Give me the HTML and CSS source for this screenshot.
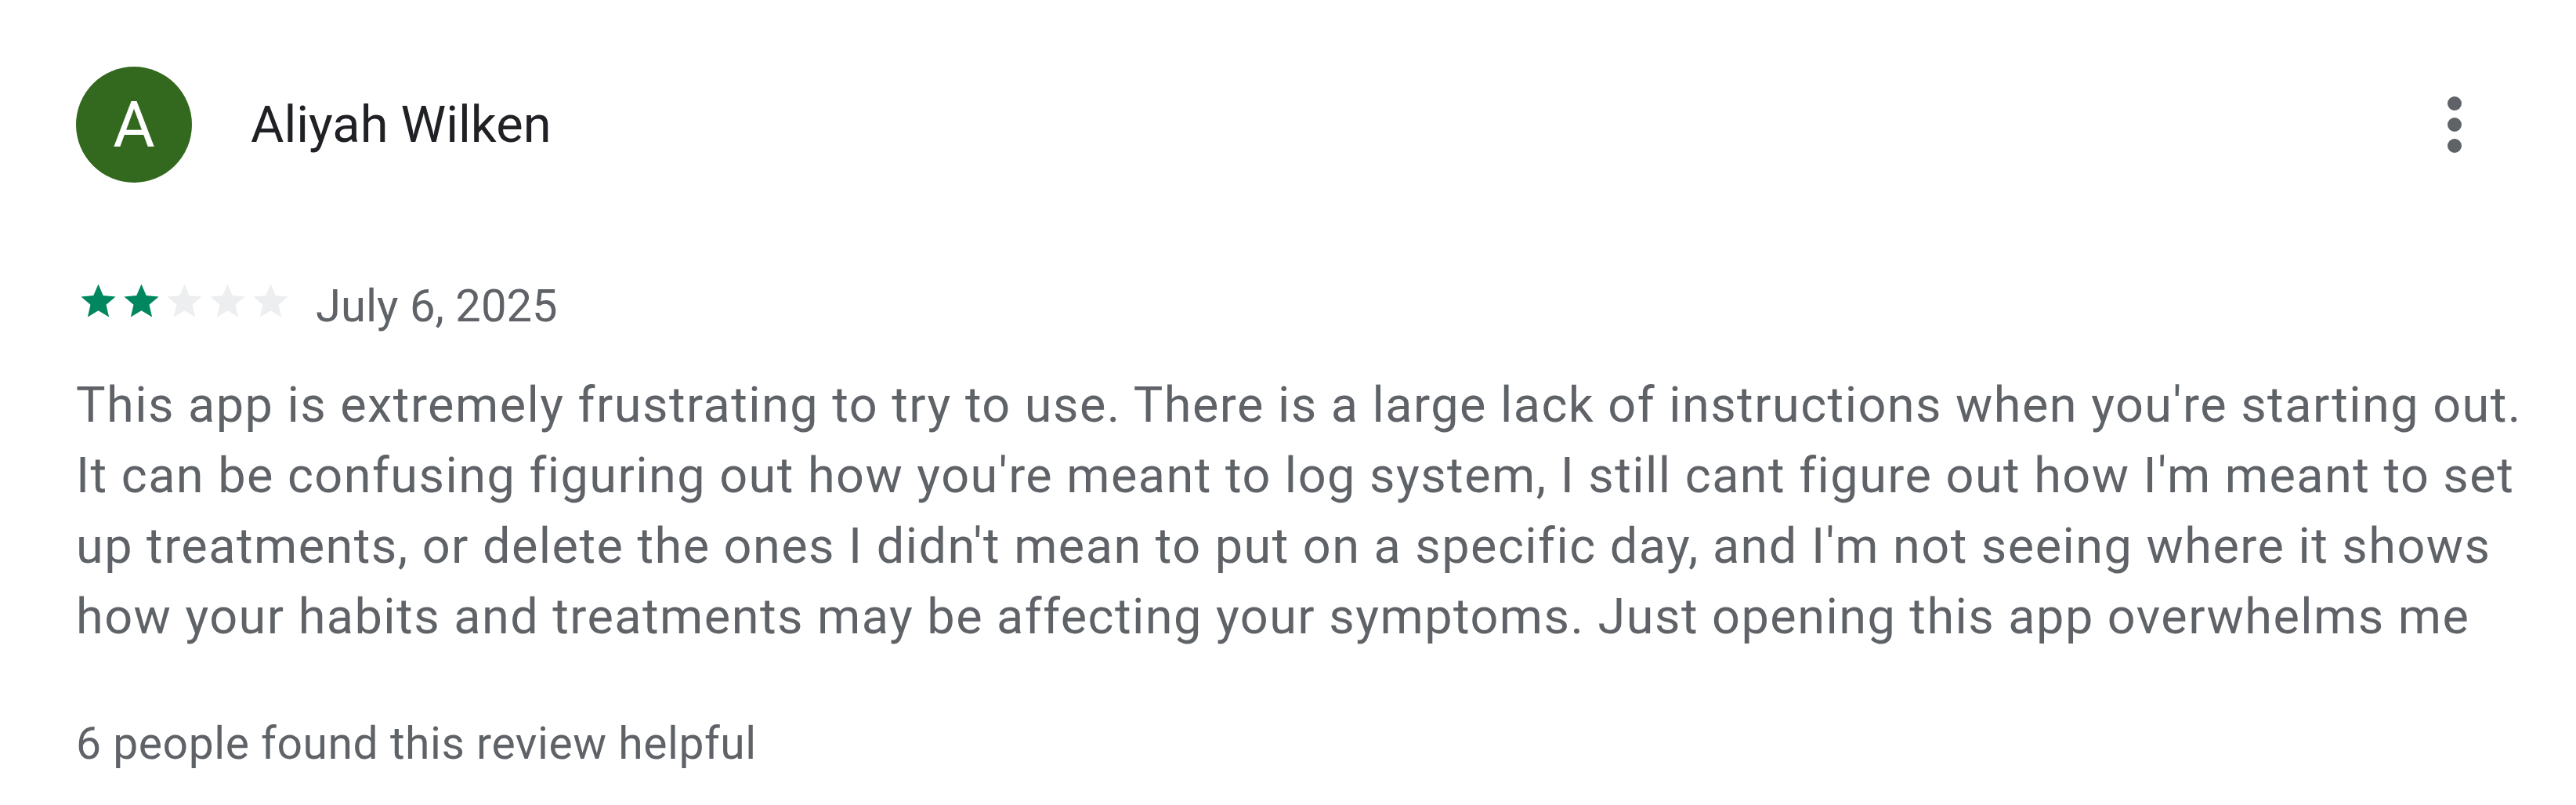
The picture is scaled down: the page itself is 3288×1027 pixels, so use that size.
FILE: index.html
```html
<!DOCTYPE html>
<html lang="en">
<head>
<meta charset="utf-8">
<title>Review</title>
<link rel="stylesheet" href="styles.css">
</head>
<body>
<div class="review">
  <header class="review-header">
    <div class="avatar">A</div>
    <div class="author">Aliyah Wilken</div>
    <button class="more" aria-label="More options">
      <svg viewBox="0 0 24 24" width="108" height="108"><circle cx="12" cy="6" r="2"/><circle cx="12" cy="12" r="2"/><circle cx="12" cy="18" r="2"/></svg>
    </button>
  </header>
  <div class="meta">
    <div class="stars" aria-label="Rated 2 stars out of five stars">
      <svg class="star on" viewBox="0 0 24 24"><path d="M12 17.27L18.18 21l-1.64-7.03L22 9.24l-7.19-.61L12 2 9.19 8.63 2 9.24l5.46 4.73L5.820 21z"/></svg>
      <svg class="star on" viewBox="0 0 24 24"><path d="M12 17.27L18.18 21l-1.64-7.03L22 9.24l-7.19-.61L12 2 9.19 8.63 2 9.24l5.46 4.73L5.82 21z"/></svg>
      <svg class="star" viewBox="0 0 24 24"><path d="M12 17.27L18.18 21l-1.64-7.03L22 9.24l-7.19-.61L12 2 9.19 8.63 2 9.24l5.46 4.73L5.82 21z"/></svg>
      <svg class="star" viewBox="0 0 24 24"><path d="M12 17.27L18.18 21l-1.64-7.03L22 9.24l-7.19-.61L12 2 9.19 8.63 2 9.24l5.46 4.73L5.82 21z"/></svg>
      <svg class="star" viewBox="0 0 24 24"><path d="M12 17.27L18.18 21l-1.64-7.03L22 9.24l-7.19-.61L12 2 9.19 8.63 2 9.24l5.46 4.73L5.82 21z"/></svg>
    </div>
    <span class="date">July 6, 2025</span>
  </div>
  <p class="body">This app is extremely frustrating to try to use. There is a large lack of instructions when you're starting out. It can be confusing figuring out how you're meant to log system, I still cant figure out how I'm meant to set up treatments, or delete the ones I didn't mean to put on a specific day, and I'm not seeing where it shows how your habits and treatments may be affecting your symptoms. Just opening this app overwhelms me</p>
  <div class="helpful">6 people found this review helpful</div>
</div>
</body>
</html>
```

FILE: styles.css
```css
html, body {
  margin: 0;
  padding: 0;
  background: #ffffff;
}

body {
  font-family: Roboto, "Liberation Sans", Arial, sans-serif;
  width: 3288px;
  height: 1027px;
  overflow: hidden;
}

.review {
  padding: 85px 48px 0 97px;
}

.review-header {
  display: flex;
  align-items: center;
  height: 148px;
  padding-right: 53px;
}

.avatar {
  width: 148px;
  height: 148px;
  flex: none;
  border-radius: 50%;
  background: #33691e;
  color: #ffffff;
  font-size: 82px;
  line-height: 148px;
  text-align: center;
}

.author {
  margin-left: 75px;
  font-size: 65px;
  color: #202124;
  flex: 1;
}

.more {
  flex: none;
  width: 108px;
  height: 108px;
  padding: 0;
  border: 0;
  background: none;
  fill: #5f6368;
}

.more svg {
  display: block;
}

.meta {
  display: flex;
  align-items: flex-start;
  margin-top: 125px;
}

.stars {
  display: flex;
  gap: 2px;
  margin-left: 2px;
}

.star {
  width: 53px;
  height: 53px;
  fill: #eceef0;
}

.star.on {
  fill: #01875f;
}

.date {
  margin-left: 31px;
  margin-top: 6px;
  font-size: 58px;
  line-height: 53px;
  color: #5f6368;
}

.body {
  margin: 55px 0 0;
  font-size: 63px;
  line-height: 90px;
  letter-spacing: 1.45px;
  color: #5f6368;
}

.helpful {
  margin-top: 77px;
  font-size: 57px;
  line-height: 80px;
  letter-spacing: 0.55px;
  color: #5f6368;
}
```
